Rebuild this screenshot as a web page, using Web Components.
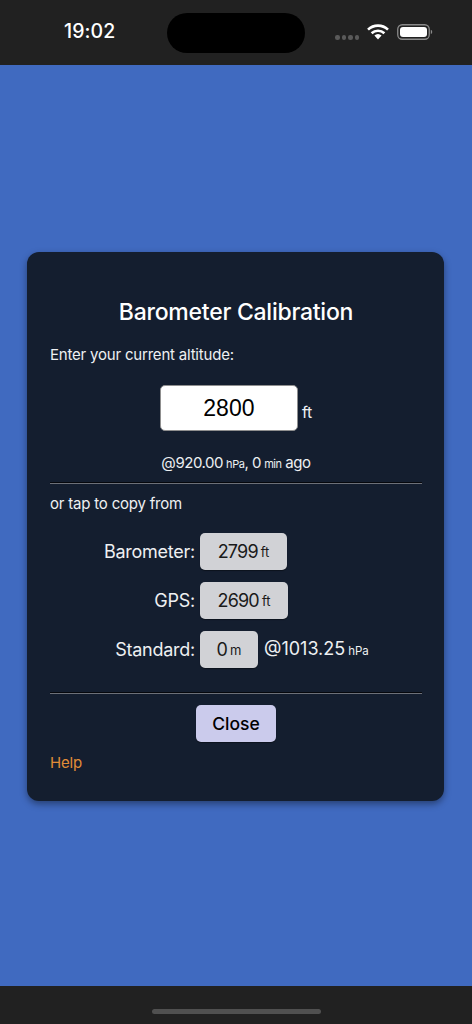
<!DOCTYPE html>
<html lang="en">
<head>
<meta charset="utf-8">
<title>Barometer Calibration</title>
<style>
  html, body { margin: 0; height: 100%; }
  body { background: #406ac0; font-family: Inter, "Liberation Sans", sans-serif; }
  #app { display: flex; flex-direction: column; height: 1024px; width: 472px; overflow: hidden; }
</style>
</head>
<body>
<div id="app">
  <status-bar time="19:02"></status-bar>
  <modal-page>
    <calibration-card>
      <copy-row label="Barometer:"><copy-button value="2799" unit="ft" w="87"></copy-button></copy-row>
      <copy-row label="GPS:"><copy-button value="2690" unit="ft" w="88"></copy-button></copy-row>
      <copy-row label="Standard:">
        <copy-button value="0" unit="m" w="58"></copy-button>
        <span slot="after">@1013.25<small style="font-size:11.5px;margin-left:3px">hPa</small></span>
      </copy-row>
    </calibration-card>
  </modal-page>
  <home-bar></home-bar>
</div>

<script>
class StatusBar extends HTMLElement {
  constructor() {
    super();
    this.attachShadow({ mode: 'open' });
  }

  connectedCallback() {
    this.shadowRoot.innerHTML = /* html */`
    <style>
      :host { display: grid; grid-template-columns: 1fr 138px 1fr; height: 65px; flex: none; background: #212121; color: #fff; }
      .time { font: 500 19.5px/1 Inter, sans-serif; padding: 22px 0 0 64px; letter-spacing: .1px; }
      .island { width: 138px; height: 40px; margin-top: 13px; border-radius: 20px; background: #000; }
      .icons { display: flex; align-items: flex-start; padding: 24px 0 0 30px; }
      .dots { display: flex; gap: 2px; margin: 11px 8px 0 0; }
      .dots i { width: 4.5px; height: 4.5px; border-radius: 50%; background: #5a5a5a; }
      svg { display: block; }
    </style>
    <div class="time">${this.getAttribute('time')}</div>
    <div class="island"></div>
    <div class="icons">
      <div class="dots"><i></i><i></i><i></i><i></i></div>
      <svg width="22" height="16" viewBox="0 0 22 16" style="margin-right:8px">
        <path d="M1 5.6 A14.5 14.5 0 0 1 21 5.6" fill="none" stroke="#fff" stroke-width="2.6"/>
        <path d="M4.6 9.2 A9.4 9.4 0 0 1 17.4 9.2" fill="none" stroke="#fff" stroke-width="2.6"/>
        <path d="M7.4 11.6 L11 15.4 L14.6 11.6 A5 5 0 0 0 7.4 11.6 Z" fill="#fff"/>
      </svg>
      <svg width="36" height="16" viewBox="0 0 36 16">
        <rect x=".75" y=".75" width="31.5" height="14.5" rx="4.5" fill="none" stroke="#8a8a8a" stroke-width="1.3"/>
        <rect x="3" y="3" width="27" height="10" rx="3" fill="#fff"/>
        <path d="M33.8 5.8 A2.4 2.4 0 0 1 33.8 10.2 Z" fill="#8a8a8a"/>
      </svg>
    </div>`;
  }
}

class ModalPage extends HTMLElement {
  constructor() {
    super();
    this.attachShadow({ mode: 'open' });
  }

  connectedCallback() {
    this.shadowRoot.innerHTML = /* html */`
    <style>
      :host { display: flex; flex: 1; align-items: center; justify-content: center; padding: 2px 1px 0 0; background: #406ac0; }
    </style>
    <slot></slot>`;
  }
}

class CalibrationCard extends HTMLElement {
  constructor() {
    super();
    this.attachShadow({ mode: 'open' });
  }

  connectedCallback() {
    this.shadowRoot.innerHTML = /* html */`
    <style>
      :host {
        display: block; box-sizing: border-box; width: 417px; height: 549px; padding: 0 22px 0 23px;
        background: #141e2f; border-radius: 12px; color: #eef0f2;
        box-shadow: 0 3px 7px rgba(0,0,0,.4);
        font: 400 15px/20px Inter, sans-serif; letter-spacing: -.2px;
      }
      h2 { margin: 0; padding-top: 45px; font: 500 23px/30px Inter, sans-serif; letter-spacing: -.25px; color: #fff; text-align: center; }
      p { margin: 0; }
      .enter { margin-top: 18px; }
      .alt { display: flex; justify-content: center; align-items: center; gap: 4px; margin-top: 20px; }
      .field {
        box-sizing: border-box; width: 138px; height: 46px; background: #fff; border: 1px solid #8f8f8f; border-radius: 5px;
        color: #000; font: 400 23px/44px "Liberation Sans", sans-serif; text-align: center; letter-spacing: 0;
      }
      .alt span { font-size: 16px; margin-top: 8px; }
      .at { margin-top: 22px; text-align: center; letter-spacing: -.45px; }
      small { font-size: 11px; margin-left: 3px; }
      hr { box-sizing: border-box; height: 2px; margin: 0; border: 0; border-top: 1px solid #05070c; background: #6d7078; }
      .h1 { margin-top: 8px; }
      .tap { margin-top: 10px; }
      .rows { display: flex; flex-direction: column; gap: 12px; margin-top: 19px; }
      .h2 { margin-top: 24px; }
      .close {
        display: block; box-sizing: border-box; width: 80px; height: 37px; margin: 11px auto 0; padding: 0;
        background: #cbcbec; border: 0; border-radius: 5px; color: #000;
        font: 500 17.5px/37px Inter, sans-serif; text-align: center;
        box-shadow: 0 1px 1px rgba(0,0,0,.4);
      }
      .help { margin-top: 11px; color: #e28d37; }
    </style>
    <h2>Barometer Calibration</h2>
    <p class="enter">Enter your current altitude:</p>
    <div class="alt"><div class="field">2800</div><span>ft</span></div>
    <p class="at">@920.00<small>hPa</small>, 0<small>min</small> ago</p>
    <hr class="h1">
    <p class="tap">or tap to copy from</p>
    <div class="rows"><slot></slot></div>
    <hr class="h2">
    <button class="close">Close</button>
    <p class="help">Help</p>`;
  }
}

class CopyRow extends HTMLElement {
  constructor() {
    super();
    this.attachShadow({ mode: 'open' });
  }

  connectedCallback() {
    this.shadowRoot.innerHTML = /* html */`
    <style>
      :host { display: flex; align-items: center; gap: 5px; height: 37px; font-size: 18px; letter-spacing: -.25px; color: #eef0f2; }
      label { width: 145px; text-align: right; }
      .after { margin-left: 1px; letter-spacing: 0; }
    </style>
    <label>${this.getAttribute('label')}</label>
    <slot></slot>
    <span class="after"><slot name="after"></slot></span>`;
  }
}

class CopyButton extends HTMLElement {
  constructor() {
    super();
    this.attachShadow({ mode: 'open' });
  }

  connectedCallback() {
    this.shadowRoot.innerHTML = /* html */`
    <style>
      :host {
        display: flex; align-items: center; justify-content: center; box-sizing: border-box;
        width: ${this.getAttribute('w')}px; height: 37px; border-radius: 5px;
        background: #d1d2d6; color: #1a1a1a; font: 400 18px/37px Inter, sans-serif; letter-spacing: -.8px;
        box-shadow: 0 1px 1px rgba(0,0,0,.4);
      }
      small { font-size: 13px; margin-left: 3px; padding-top: 2px; letter-spacing: 0; }
    </style>
    ${this.getAttribute('value')}<small>${this.getAttribute('unit')}</small>`;
  }
}

class HomeBar extends HTMLElement {
  constructor() {
    super();
    this.attachShadow({ mode: 'open' });
  }

  connectedCallback() {
    this.shadowRoot.innerHTML = /* html */`
    <style>
      :host { display: flex; justify-content: center; flex: none; height: 38px; background: #212121; }
      div { width: 169px; height: 5px; margin-top: 23px; border-radius: 3px; background: #505050; }
    </style>
    <div></div>`;
  }
}

customElements.define('status-bar', StatusBar);
customElements.define('modal-page', ModalPage);
customElements.define('calibration-card', CalibrationCard);
customElements.define('copy-row', CopyRow);
customElements.define('copy-button', CopyButton);
customElements.define('home-bar', HomeBar);
</script>
</body>
</html>
